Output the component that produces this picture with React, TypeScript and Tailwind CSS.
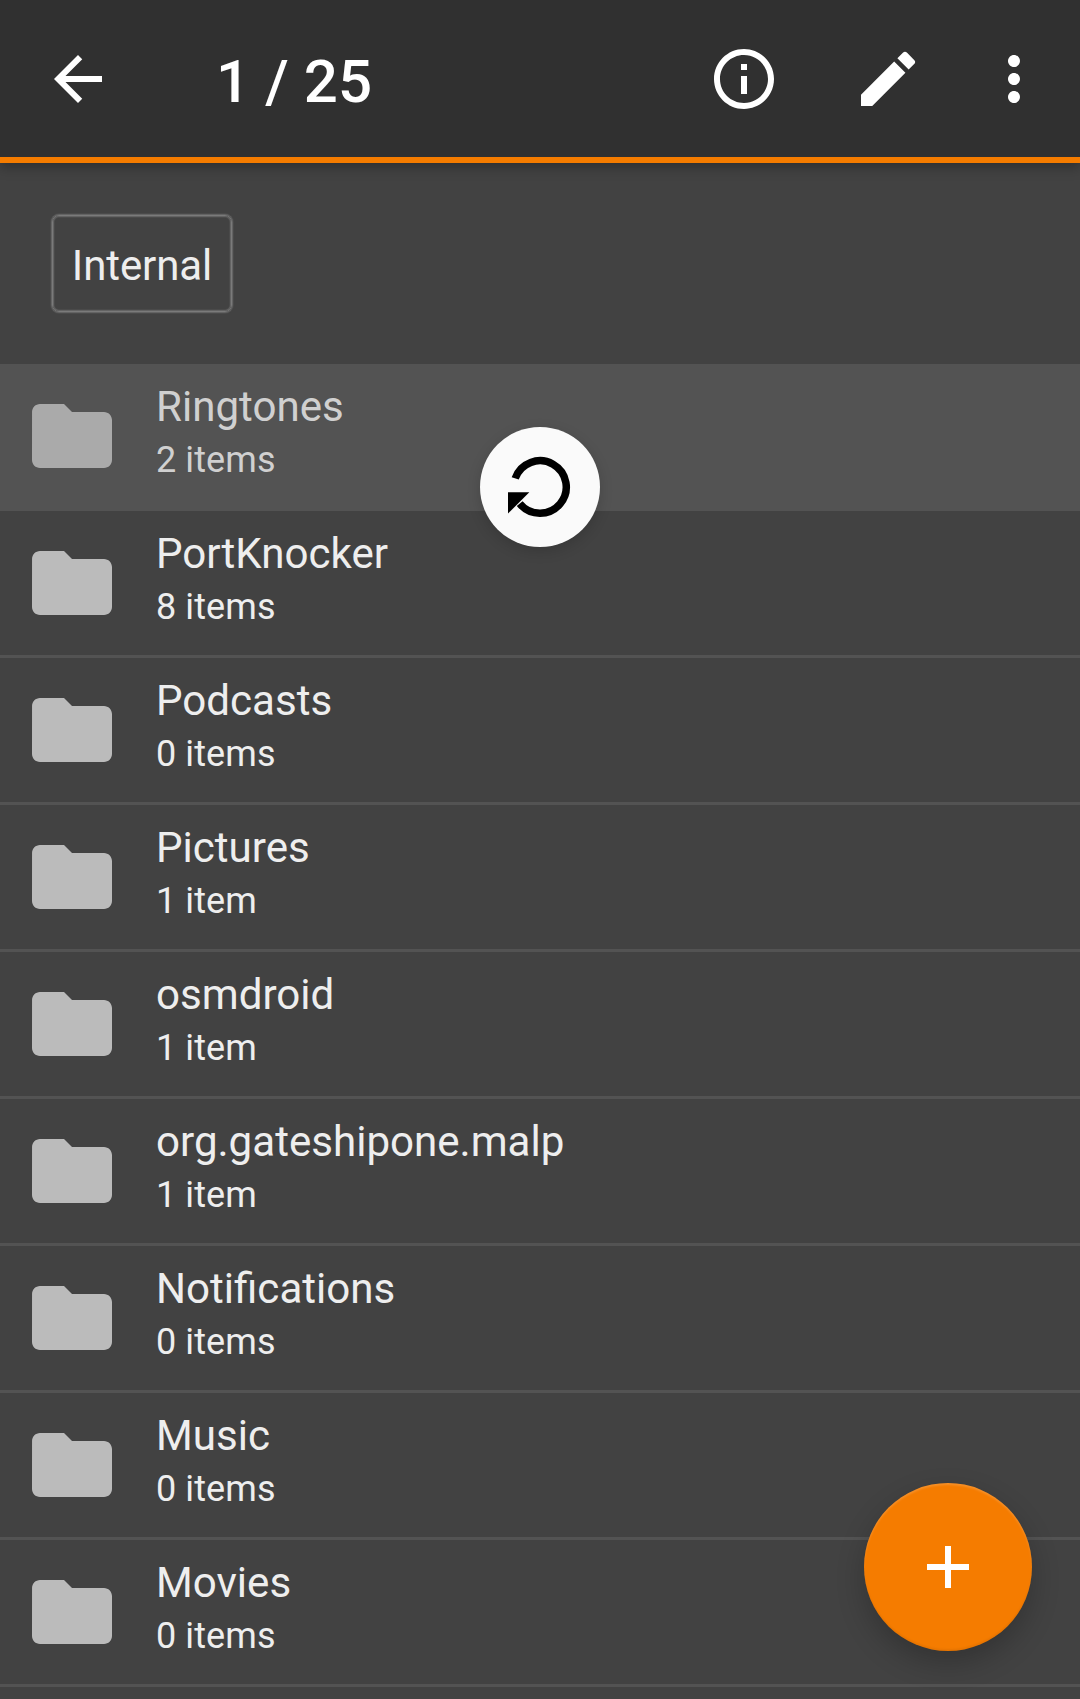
import React from "react";

const rows = [
  ["Ringtones", "2 items"],
  ["PortKnocker", "8 items"],
  ["Podcasts", "0 items"],
  ["Pictures", "1 item"],
  ["osmdroid", "1 item"],
  ["org.gateshipone.malp", "1 item"],
  ["Notifications", "0 items"],
  ["Music", "0 items"],
  ["Movies", "0 items"],
];

function Icon({ d, className }: { d: string; className: string }) {
  return (
    <svg viewBox="0 0 24 24" fill="currentColor" className={className}>
      <path d={d} />
    </svg>
  );
}

const BACK = "M20 11H7.83l5.59-5.59L12 4l-8 8 8 8 1.41-1.41L7.83 13H20v-2z";
const INFO =
  "M11 7h2v2h-2zm0 4h2v6h-2zm1-9C6.48 2 2 6.48 2 12s4.48 10 10 10 10-4.48 10-10S17.52 2 12 2zm0 18c-4.41 0-8-3.59-8-8s3.59-8 8-8 8 3.59 8 8-3.59 8-8 8z";
const EDIT =
  "M3 17.25V21h3.75L17.81 9.94l-3.75-3.75L3 17.25zM20.71 7.04a1 1 0 0 0 0-1.41l-2.34-2.34a1 1 0 0 0-1.41 0l-1.83 1.83 3.75 3.75 1.83-1.83z";
const MORE =
  "M12 8c1.1 0 2-.9 2-2s-.9-2-2-2-2 .9-2 2 .9 2 2 2zm0 2c-1.1 0-2 .9-2 2s.9 2 2 2 2-.9 2-2-.9-2-2-2zm0 6c-1.1 0-2 .9-2 2s.9 2 2 2 2-.9 2-2-.9-2-2-2z";
const FOLDER =
  "M10 4H4c-1.1 0-1.99.9-1.99 2L2 18c0 1.1.9 2 2 2h16c1.1 0 2-.9 2-2V8c0-1.1-.9-2-2-2h-8l-2-2z";

export default function App() {
  return (
    <div className="relative flex h-[1699px] w-[1080px] flex-col overflow-hidden bg-[#424242] font-['Roboto',sans-serif] text-[#eeeeee]">
      <header className="relative z-10 flex h-[163px] shrink-0 items-center border-b-[6px] border-[#f57c00] bg-[#303030] pr-[30px] pl-[42px] text-white shadow-[0_4px_12px_rgba(0,0,0,0.3)]">
        <Icon d={BACK} className="mt-px size-[72px]" />
        <h1 className="ml-[102px] flex-1 pt-[7px] text-[60px] leading-[70px] font-medium tracking-[0.1px]">
          1 / 25
        </h1>
        <Icon d={INFO} className="mt-px size-[72px]" />
        <Icon d={EDIT} className="mt-px ml-[72px] size-[72px]" />
        <Icon d={MORE} className="mt-px ml-[54px] size-[72px]" />
      </header>

      <nav className="flex h-[201px] shrink-0 items-start pt-[52px] pl-[52px]">
        <button className="h-[97px] w-[180px] rounded-[7px] border border-[#7a7a7a] pt-[3px] text-[42px] leading-[49px] tracking-[-0.1px] shadow-[0_0_0_1px_#636363,0_0_0_2px_#4a4a4a,inset_0_0_0_1px_#636363,inset_0_0_0_2px_#4a4a4a]">
          Internal
        </button>
      </nav>

      <ul className="flex flex-col">
        {rows.map(([name, count], i) => (
          <li
            key={name}
            className={
              i === 0
                ? "flex h-[147px] shrink-0 border-b-[3px] border-[#535353] bg-[#535353] pl-6"
                : "flex h-[147px] shrink-0 border-b-[3px] border-[#535353] pl-6"
            }
          >
            <Icon
              d={FOLDER}
              className={i === 0 ? "mt-6 size-24 text-[#aaaaaa]" : "mt-6 size-24 text-[#bbbbbb]"}
            />
            <div className={i === 0 ? "ml-9 pt-[18px] text-[#d0d0d0]" : "ml-9 pt-[18px]"}>
              <p className="text-[42.1px] leading-[49px]">{name}</p>
              <p className="mt-[8px] text-[36px] leading-[42px] tracking-[0.1px]">{count}</p>
            </div>
          </li>
        ))}
      </ul>

      <div className="absolute top-[427px] left-[480px] size-[120px] rounded-full bg-[#fafafa] shadow-[0_4px_14px_rgba(0,0,0,0.16)]">
        <svg viewBox="-60 -60 120 120" className="size-full">
          <path d="M-24.8-8.6A26.25 26.25 0 1 1-20.3 16.6" fill="none" stroke="#000" strokeWidth="7.5" />
          <path d="M-32 5.3h21.3L-32 26.6z" />
        </svg>
      </div>

      <button className="absolute top-[1483px] left-[864px] flex size-[168px] items-center justify-center rounded-full bg-[#f57c00] text-white shadow-[0_12px_28px_rgba(0,0,0,0.22),inset_0_2px_2px_rgba(255,255,255,0.15),inset_0_-2px_2px_rgba(0,0,0,0.06)]">
        <Icon d="M19 13h-6v6h-2v-6H5v-2h6V5h2v6h6v2z" className="size-[72px]" />
      </button>
    </div>
  );
}
